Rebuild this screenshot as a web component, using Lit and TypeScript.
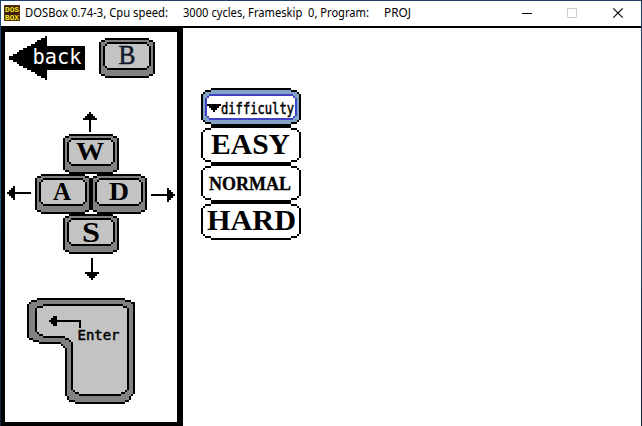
import { LitElement, html, svg, css } from "lit";
import { customElement } from "lit/decorators.js";

// A span is [row, rows, column, columns] on the 2px program grid.
type Span = [number, number, number, number];

const spans = (list: Span[]) =>
  list.map(([y, h, x, w]) => `M${x} ${y}h${w}v${h}h${-w}z`).join("");

const KEY = {
  rim: spans([[0, 1, 3, 22], [1, 1, 1, 26], [2, 16, 0, 28], [18, 1, 1, 26], [19, 1, 3, 22]]),
  side: spans([[1, 1, 3, 22], [2, 16, 1, 26], [18, 1, 3, 22]]),
  edge: spans([[2, 1, 4, 20], [3, 1, 3, 22], [4, 10, 2, 24], [14, 1, 3, 22], [15, 1, 4, 20]]),
  cap: spans([[3, 1, 4, 20], [4, 10, 3, 22], [14, 1, 4, 20]]),
};

const ENTER = {
  rim: spans([[0, 1, 5, 44], [1, 1, 2, 50], [2, 1, 1, 53], [3, 17, 0, 54], [20, 1, 1, 53], [21, 1, 3, 51], [22, 1, 6, 48], [23, 1, 17, 37], [24, 1, 18, 36], [25, 23, 19, 35], [48, 1, 19, 34], [49, 2, 20, 32], [51, 1, 21, 30], [52, 1, 24, 25]]),
  side: spans([[1, 1, 5, 44], [2, 1, 2, 50], [3, 17, 1, 52], [20, 1, 3, 50], [21, 1, 6, 47], [22, 1, 17, 36], [23, 1, 18, 35], [24, 1, 19, 34], [25, 23, 20, 33], [48, 1, 20, 32], [49, 2, 21, 30], [51, 1, 24, 25]]),
  edge: spans([[3, 1, 8, 40], [4, 1, 5, 45], [5, 12, 4, 47], [17, 1, 5, 46], [18, 1, 6, 45], [19, 1, 8, 43], [20, 1, 19, 32], [21, 1, 21, 30], [22, 24, 22, 29], [46, 1, 23, 27], [47, 1, 24, 25], [48, 1, 26, 21]]),
  cap: spans([[4, 1, 8, 40], [5, 12, 5, 45], [17, 1, 6, 44], [18, 1, 8, 42], [19, 1, 19, 31], [20, 1, 21, 29], [21, 1, 22, 28], [22, 24, 23, 27], [46, 1, 24, 25], [47, 1, 26, 21]]),
  arrow: spans([[11, 1, 11, 16], [12, 3, 26, 1], [10, 3, 12, 3], [9, 5, 13, 2]]),
};

const OPTION = {
  rim: spans([[0, 1, 5, 40], [1, 1, 2, 46], [2, 1, 1, 48], [3, 13, 0, 50], [16, 1, 1, 48], [17, 1, 2, 46], [18, 1, 5, 40]]),
  body: spans([[1, 1, 5, 40], [2, 1, 2, 46], [3, 13, 1, 48], [16, 1, 2, 46], [17, 1, 5, 40]]),
  line: spans([[3, 1, 4, 42], [4, 1, 3, 44], [5, 9, 2, 46], [14, 1, 3, 44], [15, 1, 4, 42]]),
  field: spans([[4, 1, 4, 42], [5, 9, 3, 44], [14, 1, 4, 42]]),
  caret: spans([[8, 1, 3, 7], [9, 1, 4, 5], [10, 1, 5, 3], [11, 1, 6, 1]]),
};

const backRows: Span[] = [];
for (let i = 0; i < 11; i++) {
  const left = Math.max(0, Math.round(18 - i * 1.8));
  backRows.push([i, 1, left, 19 - left], [21 - i, 1, left, 19 - left]);
}
const BACK = spans([...backRows, [5, 12, 19, 19]]);

const HEAD: Span[] = [[0, 1, 3, 1], [1, 1, 2, 3], [2, 1, 1, 5], [3, 1, 0, 7]];
const UP = spans([...HEAD, [4, 6, 3, 1]]);
const DOWN = spans([[0, 7, 3, 1], [7, 1, 0, 7], [8, 1, 1, 5], [9, 1, 2, 3], [10, 1, 3, 1]]);
const LEFT = spans([[3, 1, 0, 12], [2, 3, 1, 1], [1, 5, 2, 1], [0, 7, 3, 1]]);
const RIGHT = spans([[3, 1, 0, 12], [0, 7, 8, 1], [1, 5, 9, 1], [2, 3, 10, 1]]);

const at = (x: number, y: number) => `translate(${x} ${y}) scale(2)`;

const keyShape = (s: typeof KEY, x: number, y: number) => svg`
  <g transform=${at(x, y)} shape-rendering="crispEdges">
    <path class="ink" d=${s.rim}/><path class="side" d=${s.side}/>
    <path class="ink" d=${s.edge}/><path class="cap" d=${s.cap}/>
  </g>`;

const pix = (d: string, x: number, y: number) =>
  svg`<path class="ink" shape-rendering="crispEdges" transform=${at(x, y)} d=${d}/>`;

const label = (cls: string, t: string, x: number, y: number, w: number) =>
  svg`<text class=${cls} x=${x} y=${y} textLength=${w} lengthAdjust="spacingAndGlyphs">${t}</text>`;

@customElement("app-root")
export class AppRoot extends LitElement {
  static styles = css`
    :host {
      display: block;
      box-sizing: border-box;
      width: 642px;
      height: 426px;
      padding: 1px 1px 0;
      overflow: hidden;
      background: linear-gradient(#1e4068, #1d5a7d 50%, #16274d 80%, #14243f);
    }
    svg { display: block; overflow: visible; }
    text { white-space: pre; }
    .bar {
      display: flex;
      height: 25px;
      background: #fff;
    }
    .caption { flex: 1; }
    .main {
      display: flex;
      height: 400px;
      background: #fff;
    }
    .panel {
      box-sizing: border-box;
      width: 182px;
      height: 400px;
      border: 4px solid #000;
      border-top-width: 6px;
      border-right-width: 6px;
    }
    .menu {
      flex: 1;
      display: flex;
      flex-direction: column;
      border-top: 2px solid #000;
      padding: 60px 0 0 18px;
    }
    .ink { fill: #000; }
    .side { fill: #828282; }
    .cap { fill: #c3c3c3; }
    .paper { fill: #fff; }
    .steel { fill: #82a2c6; }
    .line { fill: #4040c4; }
    .title { font: 12px "Noto Sans", "Open Sans", sans-serif; }
    .logo { font: bold 8px "Liberation Mono", monospace; fill: #f4e51c; }
    .back { font: 20.5px "DejaVu Sans Mono", monospace; fill: #fff; }
    .b { font: 27px "Liberation Serif", serif; fill: #10182c; stroke: #10182c; stroke-width: 0.5; }
    .k24 { font: bold 25px "Liberation Serif", serif; }
    .k30 { font: bold 30px "Liberation Serif", serif; }
    .k18 { font: bold 18px "Liberation Serif", serif; stroke: #000; stroke-width: 0.3; }
    .mono { font: 14px "DejaVu Sans Mono", monospace; stroke: #000; stroke-width: 0.5; }
    .drop { font: 15px "DejaVu Sans Mono", monospace; stroke: #000; stroke-width: 0.5; }
  `;

  private option(cls: string, text: string, x: number, y: number, w: number) {
    return html`<svg width="100" height="38">
      <g transform="scale(2)" shape-rendering="crispEdges">
        <path class="ink" d=${OPTION.rim} /><path class="paper" d=${OPTION.body} />
      </g>
      ${label(cls, text, x, y, w)}
    </svg>`;
  }

  render() {
    return html`
      <div class="bar">
        <svg class="caption" height="25" viewBox="1 1 500 25" preserveAspectRatio="xMinYMin">
          <rect x="4" y="5" width="16" height="16" fill="#3c1f08" />
          <rect x="4.5" y="5.5" width="15" height="15" fill="none" stroke="#5c3510" />
          ${label("logo", "DOS", 5, 12, 14)} ${label("logo", "BOX", 5, 19.5, 14)}
          ${label("title", "DOSBox 0.74-3, Cpu speed:", 25, 17, 143)}
          ${label("title", "3000 cycles, Frameskip  0, Program:", 183, 17, 186)}
          ${label("title", "PROJ", 384, 17, 27)}
        </svg>
        <svg width="140" height="25" viewBox="501 1 140 25">
          <g fill="none" stroke-width="1">
            <path d="M522 13.5h10" stroke="#000" />
            <path d="M567.5 8.5h9v9h-9z" stroke="#ccc" />
            <path d="M613.3 8.3l9.4 9.4M622.7 8.3l-9.4 9.4" stroke="#000" stroke-width="1.1" />
          </g>
        </svg>
      </div>
      <div class="main">
        <div class="panel">
          <svg width="172" height="390" viewBox="5 32 172 390">
            ${pix(BACK, 9, 36)} ${label("back", "back", 32.5, 64, 49)}
            ${keyShape(KEY, 99, 38)} ${label("b", "B", 118.5, 64, 17)}
            ${pix(UP, 83, 112)}
            ${keyShape(KEY, 63, 134)} ${label("k24", "W", 76, 160, 28)}
            ${keyShape(KEY, 35, 174)} ${label("k24", "A", 53, 200, 18)}
            ${keyShape(KEY, 91, 174)} ${label("k24", "D", 109, 200, 20)}
            ${keyShape(KEY, 63, 214)} ${label("k30", "S", 82, 242, 18)}
            ${pix(LEFT, 7, 186)} ${pix(RIGHT, 151, 188)} ${pix(DOWN, 85, 258)}
            ${keyShape(ENTER, 27, 298)} ${pix(ENTER.arrow, 27, 298)}
            ${label("mono", "Enter", 77.5, 340, 42)}
          </svg>
        </div>
        <div class="menu">
          <svg width="100" height="38">
            <g transform="scale(2)" shape-rendering="crispEdges">
              <path class="ink" d=${OPTION.rim} /><path class="steel" d=${OPTION.body} />
              <path class="line" d=${OPTION.line} /><path class="paper" d=${OPTION.field} />
              <path class="ink" d=${OPTION.caret} />
            </g>
            ${label("drop", "difficulty", 20, 26, 73)}
          </svg>
          ${this.option("k30", "EASY", 10, 28, 79)}
          ${this.option("k18", "NORMAL", 8, 26, 82)}
          ${this.option("k30", "HARD", 6, 28, 89)}
        </div>
      </div>
    `;
  }
}
